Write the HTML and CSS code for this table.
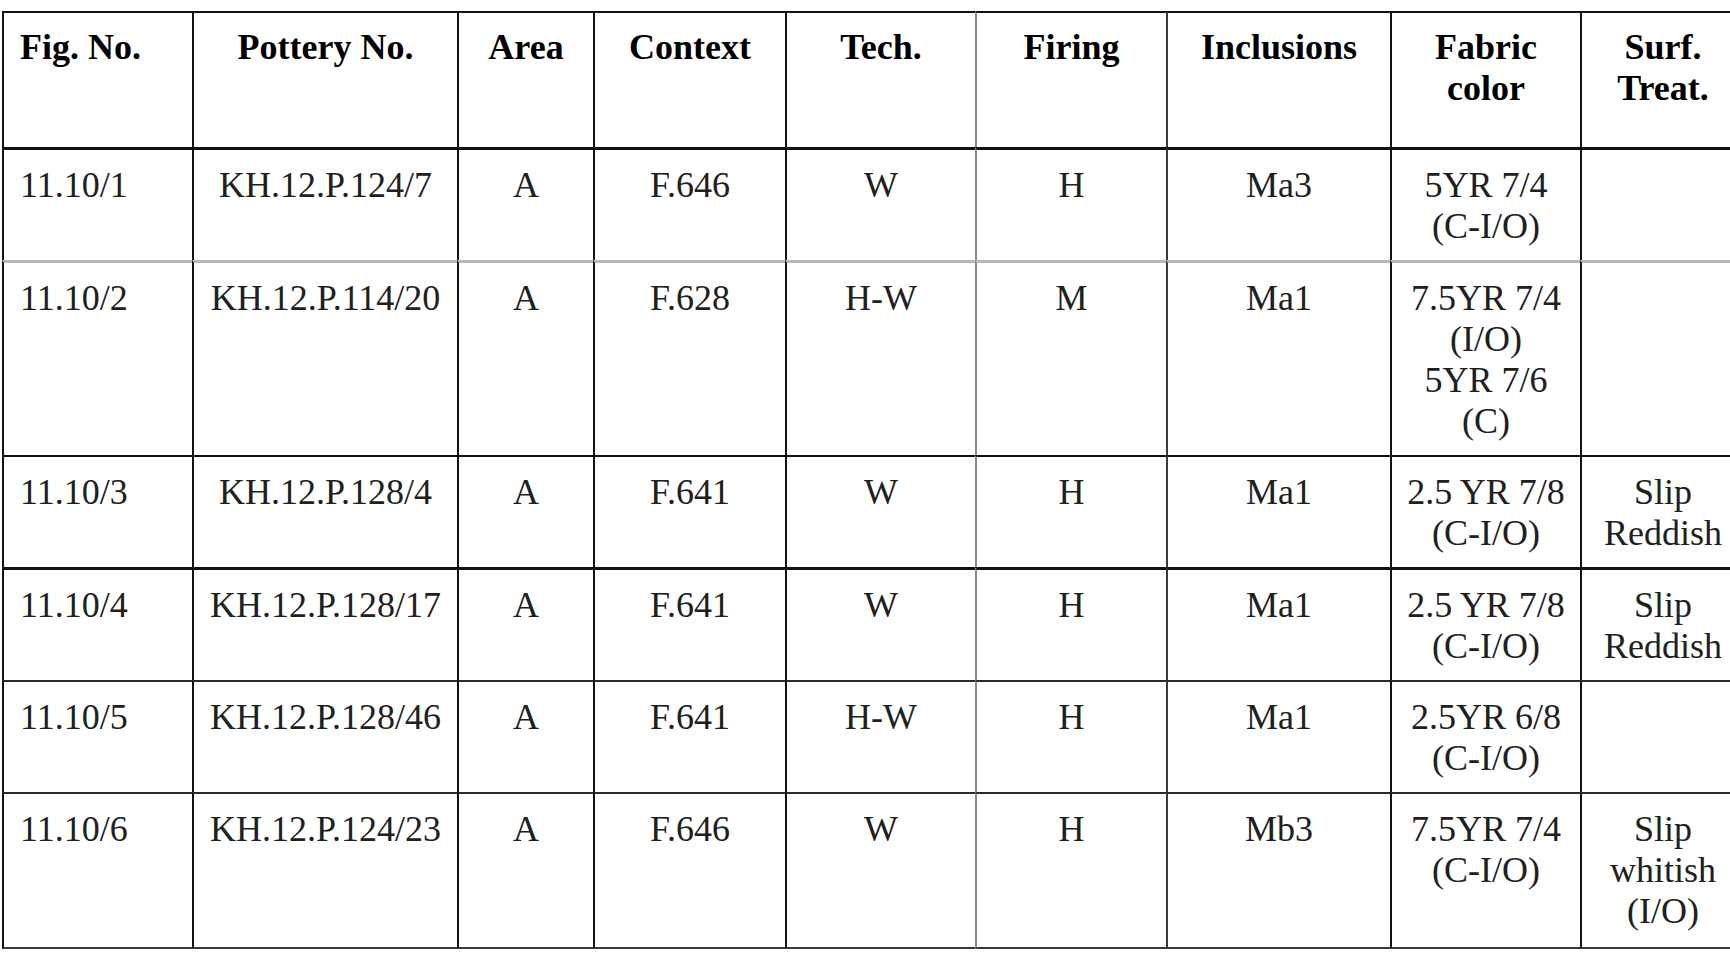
FILE: index.html
```html
<!DOCTYPE html>
<html lang="en">
<head>
<meta charset="utf-8">
<title>Pottery table</title>
<link rel="stylesheet" href="styles.css">
</head>
<body>
<div class="sheet">
<table class="pottery">
  <colgroup>
    <col class="w-fig">
    <col class="w-pot">
    <col class="w-area">
    <col class="w-ctx">
    <col class="w-tech">
    <col class="w-fire">
    <col class="w-incl">
    <col class="w-fab">
    <col class="w-surf">
  </colgroup>
  <thead>
    <tr class="r-head">
      <th class="c-fig">Fig. No.</th>
      <th>Pottery No.</th>
      <th>Area</th>
      <th>Context</th>
      <th>Tech.</th>
      <th class="c-fire">Firing</th>
      <th class="c-incl">Inclusions</th>
      <th>Fabric color</th>
      <th>Surf. Treat.</th>
    </tr>
  </thead>
  <tbody>
    <tr class="r-thick">
      <td class="c-fig">11.10/1</td>
      <td>KH.12.P.124/7</td>
      <td>A</td>
      <td>F.646</td>
      <td>W</td>
      <td class="c-fire">H</td>
      <td class="c-incl">Ma3</td>
      <td>5YR 7/4<br>(C-I/O)</td>
      <td></td>
    </tr>
    <tr class="r-gray">
      <td class="c-fig">11.10/2</td>
      <td>KH.12.P.114/20</td>
      <td>A</td>
      <td>F.628</td>
      <td>H-W</td>
      <td class="c-fire">M</td>
      <td class="c-incl">Ma1</td>
      <td>7.5YR 7/4<br>(I/O)<br>5YR 7/6<br>(C)</td>
      <td></td>
    </tr>
    <tr>
      <td class="c-fig">11.10/3</td>
      <td>KH.12.P.128/4</td>
      <td>A</td>
      <td>F.641</td>
      <td>W</td>
      <td class="c-fire">H</td>
      <td class="c-incl">Ma1</td>
      <td>2.5 YR 7/8<br>(C-I/O)</td>
      <td>Slip<br>Reddish</td>
    </tr>
    <tr class="r-thick">
      <td class="c-fig">11.10/4</td>
      <td>KH.12.P.128/17</td>
      <td>A</td>
      <td>F.641</td>
      <td>W</td>
      <td class="c-fire">H</td>
      <td class="c-incl">Ma1</td>
      <td>2.5 YR 7/8<br>(C-I/O)</td>
      <td>Slip<br>Reddish</td>
    </tr>
    <tr class="r-dark">
      <td class="c-fig">11.10/5</td>
      <td>KH.12.P.128/46</td>
      <td>A</td>
      <td>F.641</td>
      <td>H-W</td>
      <td class="c-fire">H</td>
      <td class="c-incl">Ma1</td>
      <td>2.5YR 6/8<br>(C-I/O)</td>
      <td></td>
    </tr>
    <tr class="r-dark r-last">
      <td class="c-fig">11.10/6</td>
      <td>KH.12.P.124/23</td>
      <td>A</td>
      <td>F.646</td>
      <td>W</td>
      <td class="c-fire">H</td>
      <td class="c-incl">Mb3</td>
      <td>7.5YR 7/4<br>(C-I/O)</td>
      <td>Slip<br>whitish<br>(I/O)</td>
    </tr>
  </tbody>
</table>
</div>
</body>
</html>
```
FILE: styles.css
```css
html, body {
  margin: 0;
  padding: 0;
  background: #ffffff;
  overflow: hidden;
}

.sheet {
  padding: 11px 0 0 2px;
}

.pottery {
  border-collapse: separate;
  border-spacing: 0;
  table-layout: fixed;
  width: 1742px;
  font-family: "Liberation Serif", "Times New Roman", serif;
  font-size: 36px;
  line-height: 41px;
  color: #202020;
}

.w-fig  { width: 190px; }
.w-pot  { width: 265px; }
.w-area { width: 136px; }
.w-ctx  { width: 192px; }
.w-tech { width: 190px; }
.w-fire { width: 191px; }
.w-incl { width: 224px; }
.w-fab  { width: 190px; }
.w-surf { width: 164px; }

.pottery th,
.pottery td {
  box-sizing: border-box;
  vertical-align: top;
  text-align: center;
  padding: 15px 6px 13px;
  border-left: 2px solid #111;
  border-top: 2px solid #111;
  white-space: normal;
}

.pottery th {
  font-weight: bold;
  color: #000;
  padding-top: 14px;
  padding-bottom: 38px;
}

.pottery .c-fig {
  text-align: left;
  padding-left: 16px;
}

.pottery .c-fire {
  border-left-color: #8a8a8a;
}

.pottery .c-incl {
  border-left-color: #3a3a3a;
}

.r-thick td {
  border-top-width: 3px;
}

.r-gray td {
  border-top: 3px solid #b8b8b8;
}

.r-dark td {
  border-top-color: #2a2a2a;
}

.r-last td {
  padding-bottom: 15px;
  border-bottom: 2px solid #3a3a3a;
}
```
